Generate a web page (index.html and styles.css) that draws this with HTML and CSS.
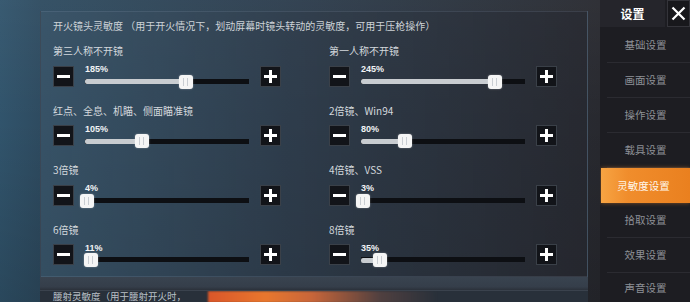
FILE: index.html
```html
<!DOCTYPE html>
<html lang="zh">
<head>
<meta charset="utf-8">
<title>灵敏度设置</title>
<link rel="stylesheet" href="styles.css">
</head>
<body>
<div class="screen">
  <div class="main">
    <section class="panel">
      <h1 class="title">开火镜头灵敏度 （用于开火情况下，划动屏幕时镜头转动的灵敏度，可用于压枪操作）</h1>
      <div class="grid">
        <div class="item">
          <div class="label">第三人称不开镜</div>
          <div class="slider-row">
            <div class="btn"><svg width="13" height="13" viewBox="0 0 13 13"><rect x="0" y="5" width="13" height="3" fill="#fff"/></svg></div>
            <div class="track-wrap" style="--p:61.67%"><div class="value">185%</div><div class="bar"><div class="fill"></div><div class="thumb"></div></div></div>
            <div class="btn"><svg width="13" height="13" viewBox="0 0 13 13"><rect x="0" y="5" width="13" height="3" fill="#fff"/><rect x="5" y="0" width="3" height="13" fill="#fff"/></svg></div>
          </div>
        </div>
        <div class="item">
          <div class="label">第一人称不开镜</div>
          <div class="slider-row">
            <div class="btn"><svg width="13" height="13" viewBox="0 0 13 13"><rect x="0" y="5" width="13" height="3" fill="#fff"/></svg></div>
            <div class="track-wrap" style="--p:81.67%"><div class="value">245%</div><div class="bar"><div class="fill"></div><div class="thumb"></div></div></div>
            <div class="btn"><svg width="13" height="13" viewBox="0 0 13 13"><rect x="0" y="5" width="13" height="3" fill="#fff"/><rect x="5" y="0" width="3" height="13" fill="#fff"/></svg></div>
          </div>
        </div>
        <div class="item">
          <div class="label">红点、全息、机瞄、侧面瞄准镜</div>
          <div class="slider-row">
            <div class="btn"><svg width="13" height="13" viewBox="0 0 13 13"><rect x="0" y="5" width="13" height="3" fill="#fff"/></svg></div>
            <div class="track-wrap" style="--p:35%"><div class="value">105%</div><div class="bar"><div class="fill"></div><div class="thumb"></div></div></div>
            <div class="btn"><svg width="13" height="13" viewBox="0 0 13 13"><rect x="0" y="5" width="13" height="3" fill="#fff"/><rect x="5" y="0" width="3" height="13" fill="#fff"/></svg></div>
          </div>
        </div>
        <div class="item">
          <div class="label">2倍镜、Win94</div>
          <div class="slider-row">
            <div class="btn"><svg width="13" height="13" viewBox="0 0 13 13"><rect x="0" y="5" width="13" height="3" fill="#fff"/></svg></div>
            <div class="track-wrap" style="--p:26.67%"><div class="value">80%</div><div class="bar"><div class="fill"></div><div class="thumb"></div></div></div>
            <div class="btn"><svg width="13" height="13" viewBox="0 0 13 13"><rect x="0" y="5" width="13" height="3" fill="#fff"/><rect x="5" y="0" width="3" height="13" fill="#fff"/></svg></div>
          </div>
        </div>
        <div class="item">
          <div class="label">3倍镜</div>
          <div class="slider-row">
            <div class="btn"><svg width="13" height="13" viewBox="0 0 13 13"><rect x="0" y="5" width="13" height="3" fill="#fff"/></svg></div>
            <div class="track-wrap" style="--p:1.33%"><div class="value">4%</div><div class="bar"><div class="fill"></div><div class="thumb"></div></div></div>
            <div class="btn"><svg width="13" height="13" viewBox="0 0 13 13"><rect x="0" y="5" width="13" height="3" fill="#fff"/><rect x="5" y="0" width="3" height="13" fill="#fff"/></svg></div>
          </div>
        </div>
        <div class="item">
          <div class="label">4倍镜、VSS</div>
          <div class="slider-row">
            <div class="btn"><svg width="13" height="13" viewBox="0 0 13 13"><rect x="0" y="5" width="13" height="3" fill="#fff"/></svg></div>
            <div class="track-wrap" style="--p:1%"><div class="value">3%</div><div class="bar"><div class="fill"></div><div class="thumb"></div></div></div>
            <div class="btn"><svg width="13" height="13" viewBox="0 0 13 13"><rect x="0" y="5" width="13" height="3" fill="#fff"/><rect x="5" y="0" width="3" height="13" fill="#fff"/></svg></div>
          </div>
        </div>
        <div class="item">
          <div class="label">6倍镜</div>
          <div class="slider-row">
            <div class="btn"><svg width="13" height="13" viewBox="0 0 13 13"><rect x="0" y="5" width="13" height="3" fill="#fff"/></svg></div>
            <div class="track-wrap" style="--p:3.67%"><div class="value">11%</div><div class="bar"><div class="fill"></div><div class="thumb"></div></div></div>
            <div class="btn"><svg width="13" height="13" viewBox="0 0 13 13"><rect x="0" y="5" width="13" height="3" fill="#fff"/><rect x="5" y="0" width="3" height="13" fill="#fff"/></svg></div>
          </div>
        </div>
        <div class="item">
          <div class="label">8倍镜</div>
          <div class="slider-row">
            <div class="btn"><svg width="13" height="13" viewBox="0 0 13 13"><rect x="0" y="5" width="13" height="3" fill="#fff"/></svg></div>
            <div class="track-wrap" style="--p:11.67%"><div class="value">35%</div><div class="bar"><div class="fill"></div><div class="thumb"></div></div></div>
            <div class="btn"><svg width="13" height="13" viewBox="0 0 13 13"><rect x="0" y="5" width="13" height="3" fill="#fff"/><rect x="5" y="0" width="3" height="13" fill="#fff"/></svg></div>
          </div>
        </div>
      </div>
    </section>
    <div class="band"></div>
    <section class="panel2">
      <div class="title2">腰射灵敏度（用于腰射开火时，</div>
      <div class="glare"></div>
    </section>
  </div>
  <aside class="sidebar">
    <div class="side-head">
      <div class="side-title">设置</div>
      <div class="close"><svg width="15" height="15" viewBox="0 0 15 15"><path d="M1.5 1.5 L13.5 13.5 M13.5 1.5 L1.5 13.5" stroke="#fff" stroke-width="2.2" fill="none"/></svg></div>
    </div>
    <nav class="nav">
      <div class="nav-item">基础设置</div>
      <div class="nav-item">画面设置</div>
      <div class="nav-item">操作设置</div>
      <div class="nav-item">载具设置</div>
      <div class="nav-item active">灵敏度设置</div>
      <div class="nav-item">拾取设置</div>
      <div class="nav-item">效果设置</div>
      <div class="nav-item">声音设置</div>
    </nav>
  </aside>
</div>
</body>
</html>
```

FILE: styles.css
```css
html, body {
  margin: 0;
  padding: 0;
}

body {
  width: 690px;
  height: 302px;
  overflow: hidden;
  background: #26272e;
  font-family: "Noto Sans CJK SC", "Noto Sans", sans-serif;
}

.screen {
  display: flex;
  width: 690px;
  height: 302px;
  background:
    linear-gradient(180deg, rgba(255,255,255,0.04) 0%, rgba(0,0,0,0) 40%, rgba(0,0,0,0.15) 100%),
    linear-gradient(90deg, #31546c 0px, #2e4b60 40px, #2c3c4c 300px, #28292f 600px);
}

.main {
  width: 600px;
  flex: none;
  box-sizing: border-box;
  padding: 11px 12px 0 40px;
  display: flex;
  flex-direction: column;
}

.panel {
  height: 266px;
  flex: none;
  box-sizing: border-box;
  border: 1px solid rgba(150, 170, 190, 0.16);
  background: linear-gradient(90deg, rgba(62, 88, 108, 0.55) 0%, rgba(48, 60, 74, 0.5) 45%, rgba(38, 40, 48, 0.6) 100%);
  padding: 7px 0 0 12px;
}

.title {
  margin: 0;
  font-size: 10px;
  font-weight: normal;
  line-height: 14px;
  color: #cdd3d8;
  white-space: nowrap;
}

.grid {
  display: grid;
  grid-template-columns: 228px 228px;
  column-gap: 48px;
  grid-auto-rows: 59.5px;
  margin-top: 11px;
}

.label {
  font-size: 10px;
  line-height: 14px;
  color: #d3d8dd;
  white-space: nowrap;
}

.slider-row {
  display: flex;
  height: 21px;
  margin-top: 7.5px;
}

.btn {
  width: 21px;
  height: 21px;
  flex: none;
  box-sizing: border-box;
  background: #121419;
  border: 1px solid #3a4048;
  display: flex;
  align-items: center;
  justify-content: center;
}

.track-wrap {
  flex: 1;
  margin: 0 11px;
}

.value {
  font-family: "Liberation Sans", Arial, sans-serif;
  font-weight: bold;
  font-size: 9px;
  line-height: 9px;
  color: #f1f3f5;
  margin-top: -0.5px;
}

.bar {
  position: relative;
  height: 14px;
  margin-top: 0.5px;
  background: linear-gradient(180deg, transparent 4.5px, #0d0f13 4.5px, #0d0f13 9.5px, transparent 9.5px);
  border-radius: 2px;
}

.fill {
  position: absolute;
  left: 0;
  top: 4.5px;
  height: 5px;
  width: var(--p);
  background: #c8ccd0;
  border-radius: 2px 0 0 2px;
}

.thumb {
  position: absolute;
  top: 0;
  left: calc(var(--p) - 7px);
  width: 14px;
  height: 14px;
  box-sizing: border-box;
  border-radius: 3px;
  background:
    linear-gradient(90deg, transparent 4px, #c9cdd2 4px, #c9cdd2 5px, transparent 5px, transparent 8px, #c9cdd2 8px, #c9cdd2 9px, transparent 9px) center / 14px 8px no-repeat,
    #f5f5f5;
  box-shadow: 0 0 2px rgba(255, 255, 255, 0.4);
}

.band {
  height: 13px;
  flex: none;
  background: linear-gradient(180deg, #39434f 0%, #353e4a 75%, #2b313a 100%);
}

.panel2 {
  flex: 1;
  display: flex;
  align-items: flex-start;
  background: #28303a;
  border-top: 1px solid #3a424d;
  padding: 0 0 0 13px;
  overflow: hidden;
}

.title2 {
  flex: none;
  width: 155px;
  font-size: 9.5px;
  line-height: 10px;
  color: #b9c0c7;
  white-space: nowrap;
}

.glare {
  flex: none;
  width: 230px;
  height: 12px;
  background: linear-gradient(90deg, #d9562a 0%, #e8772e 25%, #c8663a 45%, rgba(120, 80, 70, 0.5) 75%, rgba(60, 60, 70, 0) 100%);
  filter: blur(1px);
}

.sidebar {
  width: 90px;
  flex: none;
  background: #1d1d22;
  display: flex;
  flex-direction: column;
  overflow: hidden;
}

.side-head {
  display: flex;
  height: 27px;
  flex: none;
}

.side-title {
  width: 65px;
  background: #25252b;
  color: #ffffff;
  font-size: 12px;
  font-weight: bold;
  line-height: 27px;
  text-align: center;
}

.close {
  flex: 1;
  margin-left: 2px;
  background: #18181c;
  border: 1px solid #34343a;
  display: flex;
  align-items: center;
  justify-content: center;
}

.nav {
  display: flex;
  flex-direction: column;
  margin-top: 1px;
}

.nav-item {
  height: 35px;
  flex: none;
  box-sizing: border-box;
  margin-left: 7px;
  padding-right: 6px;
  line-height: 34px;
  text-align: center;
  font-size: 10.5px;
  color: #8e9197;
  border-bottom: 1px solid #2b2b31;
  white-space: nowrap;
}

.nav-item:last-child {
  line-height: 30px;
}

.nav-item.active {
  margin-left: 1px;
  padding-right: 4px;
  line-height: 35px;
  color: #fff6ea;
  border-bottom: none;
  background: linear-gradient(90deg, #f7a443 0%, #f08d2c 30%, #ea801f 100%);
  box-shadow: 0 0 4px rgba(240, 140, 40, 0.5);
}
```
